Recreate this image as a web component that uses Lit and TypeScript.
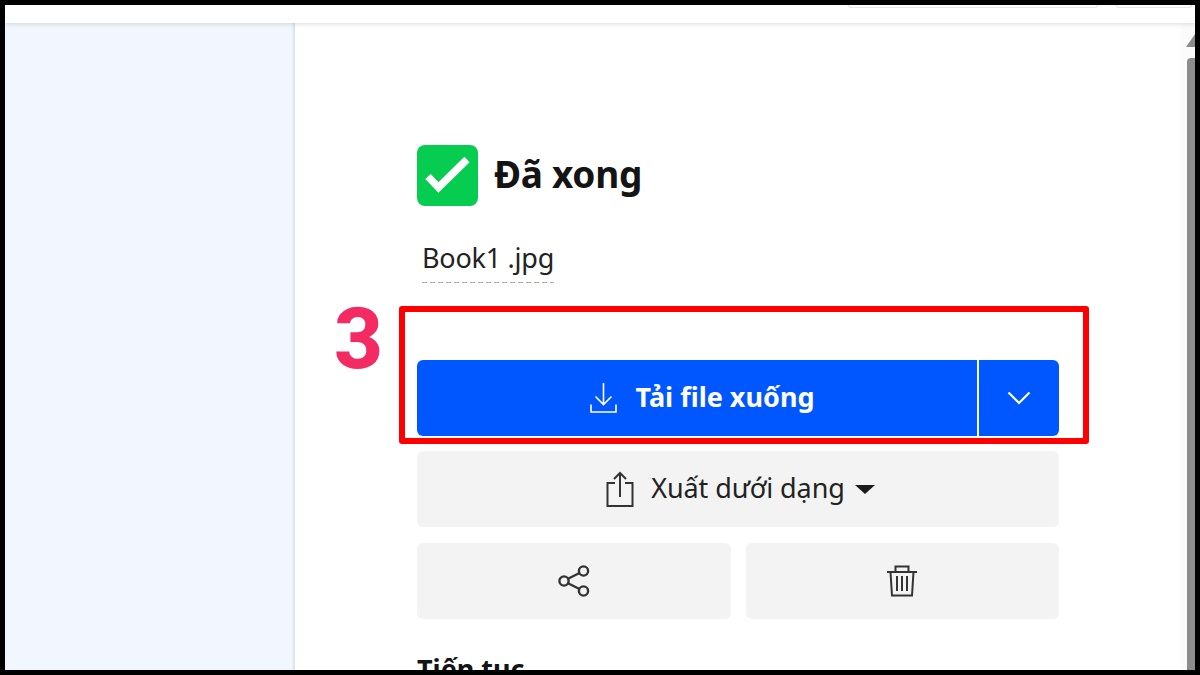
import { LitElement, html, css } from 'lit';
import { customElement } from 'lit/decorators.js';

@customElement('app-root')
export class AppRoot extends LitElement {
  static styles = css`
    :host {
      display: block;
      width: 1200px;
      height: 675px;
      box-sizing: border-box;
      padding: 5px;
      background: #000;
      font-family: 'Noto Sans', 'Liberation Sans', sans-serif;
      color: #1b1b1b;
    }
    .frame {
      position: relative;
      height: 665px;
      display: flex;
      flex-direction: column;
      background: #fff;
      overflow: hidden;
    }
    .topbar {
      flex: none;
      height: 18px;
      display: flex;
      justify-content: flex-end;
      gap: 18px;
      padding-right: 3px;
      background: #fff;
      box-shadow: 0 1px 5px rgba(0, 0, 0, 0.14);
      position: relative;
      z-index: 2;
    }
    .stub {
      height: 2px;
      border: 1px solid #e6e6e6;
      border-top: none;
      border-radius: 0 0 6px 6px;
    }
    .stub.wide { width: 248px; }
    .stub.narrow { width: 74px; }
    .body {
      flex: 1;
      min-height: 0;
      display: flex;
    }
    .sidebar {
      flex: none;
      width: 290px;
      background: #f1f6ff;
      box-shadow: inset -3px 0 2px -1px #dde2ec;
    }
    .main {
      flex: 1;
      min-width: 0;
      padding: 122px 0 0 122px;
      overflow: hidden;
    }
    .col {
      width: 642px;
      display: flex;
      flex-direction: column;
    }
    .title {
      display: flex;
      align-items: center;
      gap: 16px;
      height: 60px;
    }
    .check {
      flex: none;
      width: 61px;
      height: 61px;
      display: block;
    }
    h1 {
      margin: -2px 0 0;
      font-size: 37px;
      line-height: 60px;
      font-weight: 700;
      color: #141414;
      letter-spacing: -0.3px;
    }
    .file {
      align-self: flex-start;
      margin: 20px 0 77px 5px;
      height: 58px;
      box-sizing: border-box;
      padding-top: 16px;
      font-size: 27px;
      line-height: 34px;
      letter-spacing: -0.25px;
      background: repeating-linear-gradient(90deg, #aaa 0 5px, transparent 5px 8px) bottom / 100% 1px no-repeat;
      color: #222;
    }
    .download {
      display: flex;
      height: 76px;
      gap: 2px;
      color: #fff;
    }
    .download > div {
      background: #0057ff;
      display: flex;
      align-items: center;
      justify-content: center;
    }
    .dl-main {
      flex: 1;
      gap: 18px;
      padding-left: 11px;
      border-radius: 6px 0 0 6px;
      font-size: 27px;
      font-weight: 700;
    }
    .dl-more {
      flex: none;
      width: 80px;
      border-radius: 0 6px 6px 0;
    }
    .lift { margin-bottom: 4px; }
    .btn {
      display: flex;
      align-items: center;
      justify-content: center;
      height: 76px;
      background: #f3f3f3;
      border-radius: 6px;
    }
    .export {
      margin-top: 15px;
      gap: 14px;
      padding-left: 5px;
      font-size: 27px;
      letter-spacing: -0.1px;
      color: #222;
    }
    .export span {
      margin-left: 3px;
      margin-right: -4px;
    }
    .caret {
      width: 0;
      height: 0;
      border-left: 10px solid transparent;
      border-right: 10px solid transparent;
      border-top: 9px solid #1b1b1b;
    }
    .pair {
      display: grid;
      grid-template-columns: 314px 313px;
      gap: 15px;
      margin-top: 16px;
    }
    h2 {
      margin: 33px 0 0;
      font-size: 27px;
      line-height: 34px;
      font-weight: 700;
      color: #141414;
    }
    svg { display: block; }
    .scroll {
      flex: none;
      width: 14px;
      background: #fbfbfb;
      position: relative;
    }
    .arrow {
      position: absolute;
      left: 5px;
      top: 11px;
    }
    .thumb {
      position: absolute;
      left: 6px;
      right: 0;
      top: 35px;
      bottom: 0;
      background: #8c8c8c;
      border-radius: 4px 0 0 0;
    }
    .mark {
      position: absolute;
      left: 394px;
      top: 301px;
      width: 690px;
      height: 138px;
      box-sizing: border-box;
      border: 6px solid #ff0000;
      border-radius: 3px;
      z-index: 3;
    }
    .step {
      position: absolute;
      left: 329px;
      top: 289px;
      font-family: 'Roboto', sans-serif;
      font-size: 85px;
      line-height: 90px;
      font-weight: 800;
      color: #f42a62;
    }
  `;

  render() {
    return html`
      <div class="frame">
        <div class="topbar">
          <div class="stub wide"></div>
          <div class="stub narrow"></div>
        </div>
        <div class="body">
          <div class="sidebar"></div>
          <div class="main">
            <div class="col">
              <div class="title">
                <svg class="check" viewBox="0 0 61 61">
                  <rect width="61" height="61" rx="8" fill="#06cc4f" />
                  <path d="M11 31.5 L21.5 42.5 L50 14.5" fill="none" stroke="#fff" stroke-width="7.5" />
                </svg>
                <h1>Đã xong</h1>
              </div>
              <div class="file">Book1 .jpg</div>
              <div class="download">
                <div class="dl-main">
                  <svg width="27" height="32" viewBox="0 0 27 32" fill="none" stroke="#fff" stroke-width="1.6">
                    <path d="M13.5 1 V22 M5.5 14.5 L13.5 22.5 L21.5 14.5 M1 22.5 V30 H26 V22.5" />
                  </svg>
                  <span class="lift">Tải file xuống</span>
                </div>
                <div class="dl-more">
                  <svg width="24" height="14" viewBox="0 0 24 14" fill="none" stroke="#fff" stroke-width="2.2">
                    <path d="M1.5 1.5 L12 12 L22.5 1.5" />
                  </svg>
                </div>
              </div>
              <div class="btn export">
                <svg width="28" height="36" viewBox="0 0 28 36" fill="none" stroke="#333" stroke-width="2">
                  <path d="M9 12 H1.5 V35 H26.5 V12 H19 M14 26 V2 M8 8 L14 2 L20 8" />
                </svg>
                <span class="lift">Xuất dưới dạng</span>
                <div class="caret"></div>
              </div>
              <div class="pair">
                <div class="btn">
                  <svg width="32" height="32" viewBox="0 0 32 32" fill="none" stroke="#333" stroke-width="2.4">
                    <circle cx="6" cy="16" r="4.6" />
                    <circle cx="25.5" cy="6" r="4.6" />
                    <circle cx="25.5" cy="26" r="4.6" />
                    <path d="M10 13.8 L21.5 8 M10 18.2 L21.5 24" />
                  </svg>
                </div>
                <div class="btn">
                  <svg style="margin-left:-2px" width="32" height="32" viewBox="0 0 32 32" fill="none" stroke="#333" stroke-width="2">
                    <path d="M1 7 H31 M9.5 7 V1.5 H22.5 V7 M4.5 7 L6 30.5 H26 L27.5 7 M11 11 V26 M16 11 V26 M21 11 V26" />
                  </svg>
                </div>
              </div>
              <h2>Tiến tục</h2>
            </div>
          </div>
          <div class="scroll">
            <svg class="arrow" width="9" height="13" viewBox="0 0 9 13"><path d="M0 13 L9 0 V13 Z" fill="#8c8c8c" /></svg>
            <div class="thumb"></div>
          </div>
        </div>
        <div class="mark"></div>
        <div class="step">3</div>
      </div>
    `;
  }
}
